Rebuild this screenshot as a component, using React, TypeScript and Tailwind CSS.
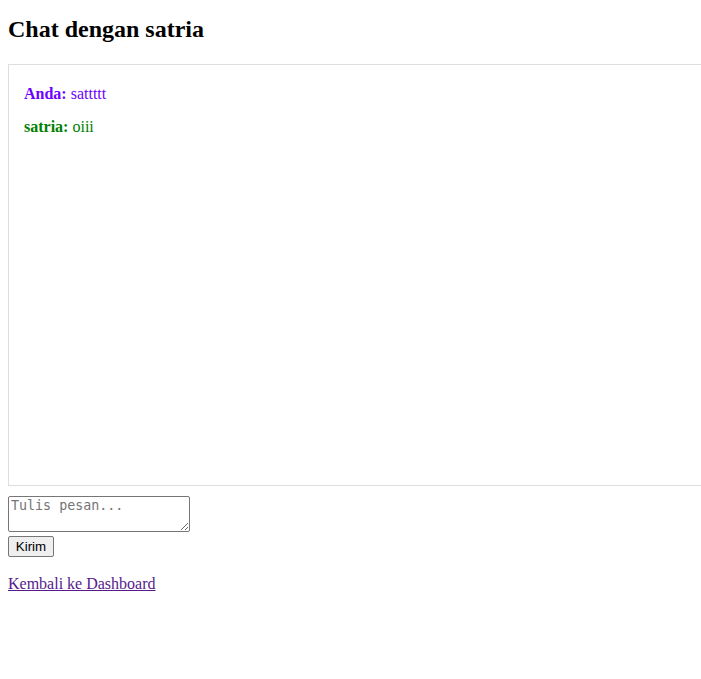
const messages = [
  { id: 1, sender: 'Anda', text: 'sattttt', mine: true },
  { id: 2, sender: 'satria', text: 'oiii', mine: false },
];

export default function App() {
  return (
    <div className="min-h-[679px] overflow-hidden bg-white p-[8px] font-['Liberation_Serif',serif] text-[16px] leading-[normal] text-black">
      <h2 className="mt-[8px] mb-[21px] text-[24px] leading-[normal] font-bold">Chat dengan satria</h2>

      <div className="box-content h-[400px] w-full border border-[#dddddd] p-[10px]">
        {messages.map((m) => (
          <p
            key={m.id}
            className={`my-[5px] p-[5px] ${m.mine ? 'text-[#6e00ff]' : 'text-[#008000]'}`}
          >
            <b>{m.sender}:</b> {m.text}
          </p>
        ))}
      </div>

      <textarea
        placeholder="Tulis pesan..."
        className="mt-[10px] block h-[36px] w-[182px] resize rounded-[2px] border border-[#767676] px-[2px] py-[1px] font-['DejaVu_Sans_Mono',monospace] text-[13.33px] leading-[normal] placeholder:text-[#757575]"
      />
      <button className="mt-[4px] block h-[21px] w-[46px] rounded-[2px] border border-[#767676] bg-[#efefef] text-center font-['Liberation_Sans',sans-serif] text-[13.33px] leading-[normal]">
        Kirim
      </button>

      <p className="mt-[18px]">
        <a href="#" className="text-[#551a8b] underline">
          Kembali ke Dashboard
        </a>
      </p>
    </div>
  );
}
